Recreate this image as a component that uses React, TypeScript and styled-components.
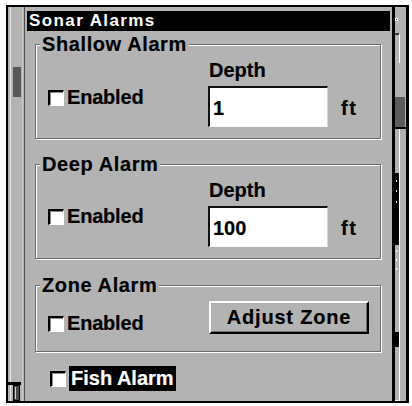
import * as React from 'react';
import styled, {createGlobalStyle} from 'styled-components';

const GlobalStyle = createGlobalStyle`
    html, body {
        margin: 0;
        padding: 0;
        background: #fff;
    }
    body {
        font-family: "Liberation Sans", Arial, sans-serif;
    }
`;

const GRAY = '#b3b3b3';

const Screen = styled.div`
    box-sizing: border-box;
    margin: 5px 0 0 6px;
    width: 403px;
    height: 398px;
    border: 2px solid #000;
    border-right-width: 3px;
    background: ${GRAY};
    display: flex;
    overflow: hidden;
`;

const SideStrip = styled.div<{$w: number}>`
    width: ${p => p.$w}px;
    flex: none;
    display: flex;
`;

const Dialog = styled.div`
    box-sizing: border-box;
    width: 371px;
    flex: none;
    border-left: 1px solid #4c4c4c;
    border-right: 3px solid #000;
    padding: 4px 2px 0 2px;
    display: flex;
    flex-direction: column;
`;

const TitleBar = styled.div`
    height: 20px;
    background: #000;
    color: #fff;
    font-size: 17px;
    font-weight: bold;
    line-height: 20px;
    letter-spacing: 1.4px;
    padding-left: 2px;
    white-space: nowrap;
`;

const Body = styled.div`
    padding: 0 9px 0 8px;
    display: flex;
    flex-direction: column;
`;

const GroupBox = styled.div<{$mt: number; $pt: number; $pb: number}>`
    position: relative;
    margin-top: ${p => p.$mt}px;
    padding: ${p => p.$pt}px 0 ${p => p.$pb}px 12px;
    border: 1px solid #6c6c6c;
    box-shadow: inset 1px 1px 0 #fff, 1px 1px 0 #fff;
`;

const Legend = styled.div`
    position: absolute;
    top: -12px;
    left: 4px;
    padding: 0 2px;
    background: ${GRAY};
    color: #000;
    font-size: 20px;
    font-weight: bold;
    line-height: 22px;
    letter-spacing: 0.6px;
    white-space: nowrap;
    -webkit-text-stroke: 0.2px #000;
`;

const Row = styled.div`
    display: flex;
    align-items: flex-start;
`;

const LeftCol = styled.div<{$mt: number}>`
    width: 160px;
    flex: none;
    margin-top: ${p => p.$mt}px;
`;

const RightCol = styled.div`
    display: flex;
    flex-direction: column;
`;

const CheckRow = styled.div<{$ml?: number}>`
    display: flex;
    align-items: center;
    margin-left: ${p => p.$ml || 0}px;
`;

const CheckBox = styled.span`
    box-sizing: border-box;
    display: inline-block;
    width: 16px;
    height: 16px;
    flex: none;
    background: #fff;
    border-top: 2px solid #000;
    border-left: 2px solid #000;
    border-right: 1px solid #fff;
    border-bottom: 1px solid #fff;
    box-shadow: inset 1px 1px 0 #8a8a8a;
    margin: 1px 3px 0 0;
`;

const Label = styled.span<{$ls?: number}>`
    font-size: 20px;
    font-weight: bold;
    line-height: 22px;
    color: #000;
    letter-spacing: ${p => p.$ls || 0}px;
    white-space: nowrap;
    -webkit-text-stroke: 0.2px currentColor;
`;

const HighlightLabel = styled(Label)`
    background: #000;
    color: #fff;
    line-height: 25px;
    padding: 0 2px 0 2px;
`;

const DepthLabel = styled(Label)`
    padding-left: 1px;
`;

const FieldRow = styled.div`
    display: flex;
    align-items: baseline;
    margin-top: 5px;
`;

const Field = styled.div`
    box-sizing: border-box;
    width: 120px;
    height: 41px;
    background: #fff;
    border-top: 2px solid #111;
    border-left: 2px solid #111;
    border-right: 1px solid #d6d6d6;
    border-bottom: 1px solid #f4f4f4;
    padding: 9px 0 0 3px;
    font-size: 20px;
    font-weight: bold;
    line-height: 22px;
    color: #000;
    -webkit-text-stroke: 0.2px #000;
`;

const Unit = styled(Label)`
    margin-left: 13px;
    letter-spacing: 1.5px;
`;

const Button = styled.div`
    box-sizing: border-box;
    width: 160px;
    height: 33px;
    margin-left: 1px;
    border-top: 2px solid #fff;
    border-left: 2px solid #fff;
    border-right: 2px solid #000;
    border-bottom: 2px solid #000;
    box-shadow: inset -1px -1px 0 #707070;
    background: ${GRAY};
    display: flex;
    align-items: center;
    justify-content: center;
    font-size: 20px;
    font-weight: bold;
    letter-spacing: 0.8px;
    color: #000;
    -webkit-text-stroke: 0.2px #000;
`;

const FishRow = styled.div`
    margin-top: 14px;
`;

const LeftDecor = () => (
    <svg width="16" height="394" viewBox="0 0 16 394">
        <rect x="2" y="0" width="1" height="394" fill="#e6e6e6"/>
        <rect x="14" y="0" width="1" height="394" fill="#c8c8c8"/>
        <rect x="5" y="60" width="8" height="30" fill="#585858"/>
        <rect x="0" y="375" width="13" height="3" fill="#000"/>
        <rect x="5.5" y="378.5" width="6" height="15" fill="#4a4a4a" stroke="#000"/>
        <rect x="7" y="380" width="1" height="12" fill="#d0d0d0"/>
    </svg>
);

const RightDecor = () => (
    <svg width="11" height="394" viewBox="0 0 11 394">
        <rect x="0" y="11" width="3" height="3" fill="#fff"/>
        <rect x="1" y="12" width="1" height="1" fill="#333"/>
        <rect x="0" y="26" width="4" height="2" fill="#333"/>
        <rect x="4" y="27" width="1" height="29" fill="#fff"/>
        <rect x="0" y="90" width="10" height="30" fill="#5c5c5c"/>
        <rect x="0" y="120" width="11" height="2" fill="#000"/>
        <rect x="4" y="122" width="1" height="272" fill="#fff"/>
        <rect x="0" y="166" width="4" height="72" fill="#000"/>
        <rect x="1" y="173" width="1" height="2" fill="#fff"/>
        <rect x="1" y="183" width="1" height="2" fill="#fff"/>
        <rect x="1" y="194" width="1" height="2" fill="#fff"/>
        <rect x="1" y="243" width="1" height="2" fill="#fff"/>
        <rect x="1" y="252" width="1" height="2" fill="#fff"/>
        <rect x="1" y="261" width="1" height="2" fill="#fff"/>
        <rect x="0" y="325" width="4" height="15" fill="#000"/>
        <rect x="0" y="393" width="5" height="1" fill="#fff"/>
    </svg>
);

interface IDepthProps {
    title: string;
    value: string;
    mt: number;
    enabledTop: number;
}

const DepthAlarm = ({title, value, mt, enabledTop}: IDepthProps) => (
    <GroupBox $mt={mt} $pt={14} $pb={11}>
        <Legend>{title}</Legend>
        <Row>
            <LeftCol $mt={enabledTop}>
                <CheckRow>
                    <CheckBox/>
                    <Label $ls={-0.2}>Enabled</Label>
                </CheckRow>
            </LeftCol>
            <RightCol>
                <DepthLabel>Depth</DepthLabel>
                <FieldRow>
                    <Field>{value}</Field>
                    <Unit>ft</Unit>
                </FieldRow>
            </RightCol>
        </Row>
    </GroupBox>
);

export default function App() {
    return (
        <>
            <GlobalStyle/>
            <Screen>
                <SideStrip $w={16}><LeftDecor/></SideStrip>
                <Dialog>
                    <TitleBar>Sonar Alarms</TitleBar>
                    <Body>
                        <DepthAlarm title="Shallow Alarm" value="1" mt={13} enabledTop={27}/>
                        <DepthAlarm title="Deep Alarm" value="100" mt={25} enabledTop={26}/>
                        <GroupBox $mt={26} $pt={15} $pb={17}>
                            <Legend>Zone Alarm</Legend>
                            <Row>
                                <LeftCol $mt={11}>
                                    <CheckRow>
                                        <CheckBox/>
                                        <Label $ls={-0.2}>Enabled</Label>
                                    </CheckRow>
                                </LeftCol>
                                <Button>Adjust Zone</Button>
                            </Row>
                        </GroupBox>
                        <FishRow>
                            <CheckRow $ml={15}>
                                <CheckBox/>
                                <HighlightLabel>Fish Alarm</HighlightLabel>
                            </CheckRow>
                        </FishRow>
                    </Body>
                </Dialog>
                <SideStrip $w={11}><RightDecor/></SideStrip>
            </Screen>
        </>
    );
}
